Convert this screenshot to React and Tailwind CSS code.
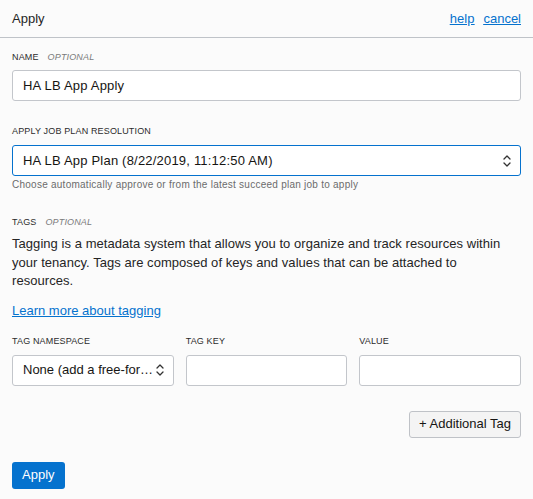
import { useState } from "react";

/* ================= ICONS ================= */
function Chevrons() {
  return (
    <svg width="8" height="14" viewBox="0 0 8 14" fill="none" stroke="#333" strokeWidth="1.3" strokeLinecap="round" strokeLinejoin="round" className="shrink-0">
      <path d="M1 5 L4 2 L7 5" />
      <path d="M1 9 L4 12 L7 9" />
    </svg>
  );
}

/* ================= PIECES ================= */
function Label({ children, optional }) {
  return (
    <div className="flex items-center gap-[9px] text-[9px] leading-[12px] tracking-[0.15px] uppercase text-[#2c2c2c]">
      <span>{children}</span>
      {optional && <span className="italic text-[#7a7a7a]">Optional</span>}
    </div>
  );
}

const fieldCls =
  "w-full h-[31px] bg-white border border-[#c3c6cb] rounded-[3px] px-[10px] text-[13px] tracking-[0.2px] text-[#161513] outline-none";

/* ================= COMPONENT ================= */
export default function App() {
  const [name, setName] = useState("HA LB App Apply");
  const [tagKey, setTagKey] = useState("");
  const [tagValue, setTagValue] = useState("");

  return (
    <div className="min-h-screen bg-[#fbfbfb] font-['Liberation_Sans',Arial,sans-serif] text-[#252525]">
      {/* HEADER */}
      <div className="h-[38px] px-3 flex items-center justify-between border-b border-[#bfc3c8]">
        <span className="text-[13px] text-[#252525]">Apply</span>
        <div className="flex gap-[9px] text-[13px] text-[#0572ce] underline">
          <a href="#">help</a>
          <a href="#">cancel</a>
        </div>
      </div>

      {/* BODY */}
      <div className="px-3 pt-[13px] pb-3">
        {/* NAME */}
        <Label optional>Name</Label>
        <input value={name} onChange={e => setName(e.target.value)} className={fieldCls + " mt-[7px] block"} />

        {/* PLAN RESOLUTION */}
        <div className="mt-[24px]">
          <Label>Apply job plan resolution</Label>
        </div>
        <div className="mt-[8px] h-[31px] bg-white border border-[#0572ce] rounded-[3px] pl-[10px] pr-[9px] flex items-center justify-between">
          <span className="text-[13px] tracking-[0.2px] text-[#161513]">HA LB App Plan (8/22/2019, 11:12:50 AM)</span>
          <Chevrons />
        </div>
        <p className="mt-[3px] text-[10px] leading-[12px] tracking-[0.25px] text-[#6b6b6b]">
          Choose automatically approve or from the latest succeed plan job to apply
        </p>

        {/* TAGS */}
        <div className="mt-[25px]">
          <Label optional>Tags</Label>
        </div>
        <p className="mt-[7px] text-[13px] leading-[18.5px] tracking-[0.05px] text-[#252525] pr-4">
          Tagging is a metadata system that allows you to organize and track resources within your tenancy. Tags are composed of keys and values that can be attached to resources.
        </p>
        <a href="#" className="block mt-[10px] text-[13px] leading-[19px] text-[#0572ce] underline w-fit">
          Learn more about tagging
        </a>

        <div className="mt-[15px] grid grid-cols-3 gap-x-3">
          <Label>Tag namespace</Label>
          <Label>Tag key</Label>
          <Label>Value</Label>
          <div className="mt-[8px] h-[31px] bg-white border border-[#c3c6cb] rounded-[3px] pl-[10px] pr-[9px] flex items-center justify-between">
            <span className="whitespace-nowrap text-[13px] text-[#161513]">None (add a free-for…</span>
            <Chevrons />
          </div>
          <input value={tagKey} onChange={e => setTagKey(e.target.value)} className={fieldCls + " mt-[8px]"} />
          <input value={tagValue} onChange={e => setTagValue(e.target.value)} className={fieldCls + " mt-[8px]"} />
        </div>

        <div className="mt-[25px] flex justify-end">
          <button className="h-[27px] px-[9px] bg-[#f4f4f4] border border-[#bfc2c7] rounded-[3px] text-[13px] text-[#161513]">
            + Additional Tag
          </button>
        </div>

        <button className="mt-[24px] h-[27px] px-[10px] bg-[#0572ce] rounded-[3px] text-[13px] text-white">
          Apply
        </button>
      </div>
    </div>
  );
}
